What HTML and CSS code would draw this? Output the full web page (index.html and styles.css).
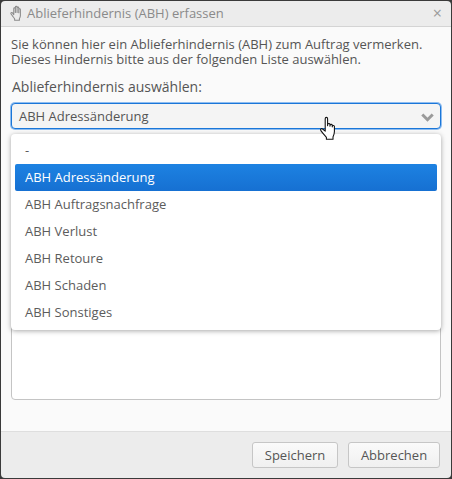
FILE: index.html
```html
<!DOCTYPE html>
<html lang="de">
  <head>
    <meta charset="UTF-8" />
    <title>Ablieferhindernis (ABH) erfassen</title>
    <link rel="stylesheet" href="styles.css">
  </head>

  <body>
    <div class="dialog">
      <div class="dialog-header">
        <svg class="hand-icon" width="15" height="16" viewBox="0 0 14 15" fill="none" stroke="#8a8a8a" stroke-width="1" stroke-linejoin="round" stroke-linecap="round">
          <path d="M3.2 11.500 1 8.400c-.6-.9.6-1.800 1.300-1L3.500 9V3.400c0-1.100 1.500-1.100 1.500 0V7 2.100c0-1.100 1.600-1.100 1.600 0V7 2.800c0-1.100 1.600-1.100 1.600 0V7.200 4.200c0-1 1.500-1 1.500 0v5.600c0 1.300-.3 2.100-.9 2.900v1.600H4.300v-1.400z"/>
        </svg>
        <span class="dialog-title">Ablieferhindernis (ABH) erfassen</span>
        <span class="dialog-close">×</span>
      </div>

      <div class="dialog-body">
        <p class="intro">Sie können hier ein Ablieferhindernis (ABH) zum Auftrag vermerken.<br>Dieses Hindernis bitte aus der folgenden Liste auswählen.</p>
        <label class="field-label">Ablieferhindernis auswählen:</label>

        <div class="select-wrap">
          <div class="select-box">
            <span>ABH Adressänderung</span>
            <svg class="chevron" width="13" height="9" viewBox="0 0 13 9" fill="none" stroke="#9a9a9a" stroke-width="3">
              <path d="M1.300 1.500 6.500 6.700 11.700 1.500"/>
            </svg>
          </div>

          <ul class="select-menu">
            <li class="option">-</li>
            <li class="option selected">ABH Adressänderung</li>
            <li class="option">ABH Auftragsnachfrage</li>
            <li class="option">ABH Verlust</li>
            <li class="option">ABH Retoure</li>
            <li class="option">ABH Schaden</li>
            <li class="option">ABH Sonstiges</li>
          </ul>

          <svg class="cursor" width="20" height="26" viewBox="0 0 18 24" stroke="#111" stroke-width="1" stroke-linejoin="round">
            <path fill="#fff" d="M5.500 14V2.500c0-1.600 2.200-1.600 2.200 0V9l.1-1.200c.2-1.200 2-1.200 2.100 0V9.500l.1-1c.2-1.100 1.900-1 2 0V10l.1-.6c.2-1 1.800-.9 1.900.1v4.800c0 2-.6 3.500-1.300 5v2.200H6.600v-1.800C5 17.800 3.500 16.300 1.500 13.500c-.9-1.300.6-2.400 1.600-1.500z"/>
          </svg>
        </div>

        <div class="notes"></div>
      </div>

      <div class="dialog-footer">
        <button class="btn">Speichern</button>
        <button class="btn">Abbrechen</button>
      </div>
    </div>
  </body>
</html>
```

FILE: styles.css
```css
* {
  margin: 0;
  padding: 0;
  box-sizing: border-box;
}

html, body {
  height: 100%;
}

body {
  font-family: 'Open Sans', sans-serif;
  background: #3a3a3a;
  color: #555;
  overflow: hidden;
}

.dialog {
  height: 479px;
  width: 452px;
  display: flex;
  flex-direction: column;
  padding: 1px;
}

.dialog-header {
  height: 26px;
  flex: none;
  display: flex;
  align-items: center;
  padding: 0 9px 1px 9px;
  background: #ececec;
  border-bottom: 1px solid #d4d4d4;
  border-radius: 4px 4px 0 0;
}

.hand-icon {
  flex: none;
  margin-right: 2px;
}

.dialog-title {
  flex: 1;
  font-size: 13px;
  color: #8a8a8a;
}

.dialog-close {
  font-size: 16px;
  line-height: 16px;
  color: #9a9a9a;
}

.dialog-body {
  flex: 1;
  background: #fafafa;
  padding: 10px 10px 0;
  position: relative;
}

.intro {
  font-size: 13px;
  line-height: 15px;
  color: #555;
}

.field-label {
  display: block;
  font-size: 14px;
  line-height: 18px;
  margin-top: 11px;
  margin-left: 1px;
  color: #555;
}

.select-wrap {
  position: relative;
  margin-top: 7px;
}

.select-box {
  height: 26px;
  display: flex;
  align-items: center;
  justify-content: space-between;
  padding: 0 6px 0 7px;
  font-size: 13px;
  color: #555;
  background: #f4f4f4;
  border: 1px solid #1a76d8;
  border-radius: 4px;
  box-shadow: 0 0 0 1px #8fbdf0;
}

.chevron {
  margin-top: 2px;
}

.select-menu {
  position: absolute;
  top: 31px;
  left: 0;
  right: 0;
  height: 196px;
  list-style: none;
  background: #fff;
  padding: 3px 4px 4px;
  border-radius: 4px;
  box-shadow: 0 1px 5px rgba(0, 0, 0, 0.35);
}

.option {
  height: 27px;
  line-height: 27px;
  padding-left: 10px;
  font-size: 13px;
  color: #5c5c5c;
}

.option.selected {
  color: #fff;
  background: linear-gradient(#1d82e2, #1670d2);
  border-radius: 2px;
}

.cursor {
  position: absolute;
  top: 13px;
  left: 308px;
}

.notes {
  height: 259px;
  margin-top: 12px;
  background: #fff;
  border: 1px solid #c4c4c4;
  border-radius: 4px;
}

.dialog-footer {
  height: 47px;
  flex: none;
  display: flex;
  justify-content: flex-end;
  align-items: center;
  gap: 10px;
  padding: 0 11px 0 0;
  background: #ececec;
  border-top: 1px solid #dedede;
  border-radius: 0 0 4px 4px;
}

.btn {
  height: 26px;
  font-family: 'Open Sans', sans-serif;
  font-size: 13px;
  color: #555;
  background: linear-gradient(#fafafa, #f0f0f0);
  border: 1px solid #c6c6c6;
  border-radius: 3px;
}

.btn:first-child {
  width: 86px;
}

.btn:last-child {
  width: 92px;
}
```
